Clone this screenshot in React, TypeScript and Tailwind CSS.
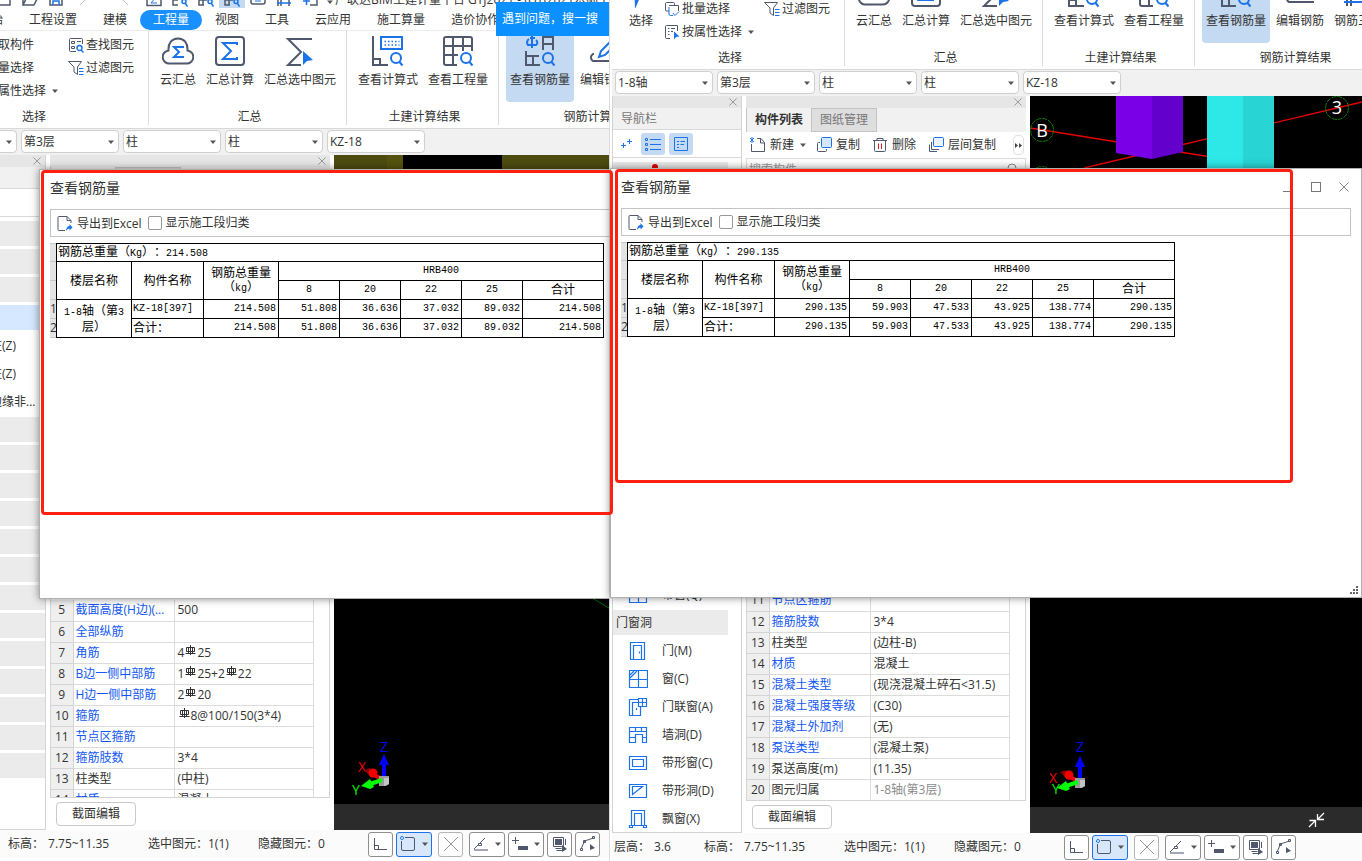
import { Fragment, type ReactNode } from 'react'
import clsx from 'clsx'

type NavRow = { label?: string; icon?: ReactNode; kind: 'group' | 'active' | 'item' }
type Prop = { no: number; name: string; value: string; plain?: boolean; muted?: boolean }
type Report = { total: string; d8: string; d20: string; d22: string; d25: string }

const DARK = '#4f586c'
const BLUE = '#1a73e8'

/* ---------- icons ---------- */

function Svg({ size = 16, children }: { size?: number; children: ReactNode }) {
  return (
    <svg width={size} height={size} viewBox={`0 0 ${size} ${size}`} fill="none" stroke={DARK} className="shrink-0">
      {children}
    </svg>
  )
}

const Magnifier = () => (
  <g stroke={BLUE} strokeWidth="2">
    <circle cx="24" cy="23" r="5" />
    <path d="M27.5 27l3 3.5" />
  </g>
)

const CloudSum = () => (
  <Svg size={32}>
    <path strokeWidth="2" d="M8 28.5A6.500 6.500 0 0 1 6.500 15.500C6 8 10 3.500 16 3.500s10 4.500 9.500 12A6.500 6.500 0 0 1 24 28.500Z" />
    <path stroke={BLUE} strokeWidth="2" d="M21 13v-1h-9l5 5-5 5h9v-1" />
  </Svg>
)
const BoxSum = () => (
  <Svg size={32}>
    <rect x="2" y="2" width="28" height="28" rx="3" strokeWidth="2" />
    <path stroke={BLUE} strokeWidth="2" d="M23 10V8H9l8 8-8 8h14v-2" />
  </Svg>
)
const SelectSum = () => (
  <Svg size={32}>
    <path strokeWidth="2" d="M28 4H4l13 13L4 30h13" />
    <path fill={BLUE} stroke="none" d="M19 16l10 9-6 1-4 4z" />
  </Svg>
)
const ViewFormula = () => (
  <Svg size={32}>
    <path strokeWidth="2" d="M1 1v29h15M1 24h7v6" />
    <rect x="9" y="2" width="21" height="12" stroke={BLUE} strokeWidth="2" />
    <path stroke={BLUE} strokeWidth="1.5" strokeDasharray="1.5 2" d="M12.5 6.500h15M12.5 10h15" />
    <Magnifier />
  </Svg>
)
const ViewQuantity = () => (
  <Svg size={32}>
    <path strokeWidth="2" d="M15 30H4a2 2 0 0 1-2-2V4a2 2 0 0 1 2-2h24a2 2 0 0 1 2 2v12M2 11h28M2 20h14M11 2v28M21 2v14" />
    <Magnifier />
  </Svg>
)
const ViewRebar = () => (
  <Svg size={32}>
    <path stroke={BLUE} strokeWidth="2" d="M8 1v12M5 4a4 4 0 0 0-1 6h8a3 3 0 0 0 0-5M6 3h5" />
    <path strokeWidth="2" d="M19 15V2h10v13M19 9h10M2 16v14h14M2 21h13M9 21v9" />
    <Magnifier />
  </Svg>
)
const EditRebar = () => (
  <Svg size={32}>
    <path strokeWidth="2" d="M6 19H5a4 4 0 0 0 0 7h25" />
    <path stroke={BLUE} strokeWidth="2" d="M11 22l2-6L26 3l4 4-13 13z" />
  </Svg>
)
const Rebar3d = () => (
  <Svg size={32}>
    <path strokeWidth="2" d="M5 30V4M9 30V8M26 30V4" />
    <path stroke={BLUE} strokeWidth="2" d="M2 26h28M2 10h28" />
  </Svg>
)
const Pointer = () => (
  <Svg size={32}>
    <path fill={BLUE} stroke="none" d="M9 4l17 14-10 1-6 14z" />
  </Svg>
)

const FindIcon = () => (
  <Svg>
    <path d="M8 14.5H2.500a1 1 0 0 1-1-1v-11a1 1 0 0 1 1-1h11a1 1 0 0 1 1 1V7M3.500 4.500h3v2h-3zM3.500 9.500h3v2h-3zM9 4.500h4" />
    <path stroke={BLUE} strokeWidth="1.5" d="M13.5 13.5l2 2M14 11a2.5 2.5 0 1 1-5 0 2.5 2.5 0 0 1 5 0z" />
  </Svg>
)
const FilterIcon = () => (
  <Svg>
    <path d="M.5 1.500h13L9.500 7v7.500L6 12V7z" />
    <path stroke={BLUE} d="M11 8.500h4.500M11 11.500h4.500M11 14.500h4.500" />
  </Svg>
)
const BatchIcon = () => (
  <Svg>
    <path d="M5 10H2.500a1 1 0 0 1-1-1V2.500a1 1 0 0 1 1-1h7a1 1 0 0 1 1 1V4M5 4.500h9.500V10" />
    <path stroke={BLUE} d="M5 6v7a1.5 1.5 0 0 0 1.500 1.500H9M9 12l2 2.500 4-4" />
  </Svg>
)
const PropSelectIcon = () => (
  <Svg>
    <path d="M6 14.500H2.500a1 1 0 0 1-1-1v-11a1 1 0 0 1 1-1h11V7M4 4.500h1.500M7 4.500h4M4 7.500h1.500M7 7.500h2M4 10.500h1.500" />
    <path fill={BLUE} stroke="none" d="M10 7.500l5.500 5-3.500.5-2 2.500z" />
  </Svg>
)
const NewIcon = () => (
  <Svg>
    <path d="M7 1.500h4l3.500 4v9h-13V7M10.500 1.500v4.500H15" />
    <path stroke={BLUE} d="M0 1l4 4M4 1L0 5M2 0v6" />
  </Svg>
)
const CopyIcon = () => (
  <Svg>
    <path d="M4 5.500H2.500a1 1 0 0 0-1 1v7a1 1 0 0 0 1 1h7a1 1 0 0 0 1-1V12" />
    <rect x="5.500" y=".5" width="10" height="10" rx="1" stroke={BLUE} fill="#d6e8ff" />
  </Svg>
)
const TrashIcon = () => (
  <Svg>
    <path d="M1 3.500h14M5 3V1.500h6V3M2.500 3.500v10a1 1 0 0 0 1 1h9a1 1 0 0 0 1-1v-10" />
    <path stroke="#e02020" d="M6.500 6.500V12M9.500 6.500V12" />
  </Svg>
)
const LayerCopyIcon = () => (
  <Svg>
    <path d="M3.500 5v7.500H11M1.500 7.500v7h7.500" />
    <rect x="5.500" y=".5" width="10" height="9" rx="1" stroke={BLUE} fill="#eaf3ff" />
  </Svg>
)
const ExportIcon = () => (
  <Svg>
    <path d="M8 14.500H2a1 1 0 0 1-1-1v-12a1 1 0 0 1 1-1h8l4 4V7M10 .5v4h4" />
    <path fill={BLUE} stroke="none" d="M9 15c0-3 1.500-5 3.500-5V8l3 3.500-3 3v-2c-1.500 0-2.500 1-3.500 2.500z" />
  </Svg>
)

const Caret = ({ className }: { className?: string }) => (
  <svg width="6" height="4" viewBox="0 0 6 4" className={clsx('shrink-0', className)}>
    <path d="M0 .5h6L3 4z" fill="#555" />
  </svg>
)
const Cross = ({ size = 8 }: { size?: number }) => (
  <svg width={size} height={size} viewBox="0 0 10 10" stroke="#888" fill="none" className="shrink-0">
    <path d="M.5.5l9 9M9.500.5l-9 9" />
  </svg>
)

const NavIcon = ({ d }: { d: string }) => (
  <svg width="20" height="20" viewBox="0 0 20 20" fill="none" stroke={BLUE} strokeWidth="1.2" className="shrink-0">
    <path d={d} />
  </svg>
)

// grade III rebar mark
const RebarMark = () => (
  <svg width="11" height="11" viewBox="0 0 11 11" fill="none" stroke="#333" className="mx-px inline-block align-[1px]">
    <path d="M1.500 2.500h8v4h-8zM5.500 0v10M.5 8.500h10M3.500 2.500v6M7.500 2.500v6" />
  </svg>
)

/* ---------- data ---------- */

const leftNav: NavRow[] = [
  { kind: 'group' },
  { kind: 'group' },
  { kind: 'group' },
  { kind: 'active' },
  { kind: 'item', label: '构造柱(Z)' },
  { kind: 'item', label: '砌体柱(Z)' },
  { kind: 'item', label: '约束边缘非...' },
  ...Array.from({ length: 13 }, (): NavRow => ({ kind: 'group' })),
]

const rightNav: NavRow[] = [
  { kind: 'group' },
  ...Array.from({ length: 14 }, (): NavRow => ({ kind: 'item' })),
  { kind: 'item', label: '带窗(Q)', icon: <NavIcon d="M1.500 2.500h17v15h-17zM1.500 10h17M10.500 2.500v15" /> },
  { kind: 'group', label: '门窗洞' },
  { kind: 'item', label: '门(M)', icon: <NavIcon d="M2.500 1.500h14v17h-14zM5.500 18.500v-14h8v14M11.500 10.500v2" /> },
  { kind: 'item', label: '窗(C)', icon: <NavIcon d="M1.500 1.500h18v17h-18zM1.500 10.500h18M10.500 1.500v17M2 6l4-4M2 9l7-7" /> },
  { kind: 'item', label: '门联窗(A)', icon: <NavIcon d="M10 2.500H1.500v16h11V9.500M4.500 18.500v-13H10M8.500 11v2M10.500 1.500h8v8h-8zM10.500 5.500h8M14.500 1.500v8" /> },
  { kind: 'item', label: '墙洞(D)', icon: <NavIcon d="M1.500 2.500h17v15h-4v-8h-7v8h-6zM1.500 6.500h17M7.500 2.500v4M13.500 2.500v4M1.500 12.500h6M14.500 12.500h4" /> },
  { kind: 'item', label: '带形窗(C)', icon: <NavIcon d="M1.500 3.500h17v13h-17zM4.500 6.500h11v7h-11z" /> },
  { kind: 'item', label: '带形洞(D)', icon: <NavIcon d="M1.500 3.500h17v13h-17zM4.500 13.500v-8h10z" /> },
  { kind: 'item', label: '飘窗(X)', icon: <NavIcon d="M3.500 1.500h13v15h-13zM6.500 16.500v-12h7v12M1.500 16.500h3v2h-3zM15.500 16.500h3v2h-3z" /> },
]

// '#' stands for the rebar mark
const leftProps: Prop[] = [
  { no: 5, name: '截面高度(H边)(...', value: '500' },
  { no: 6, name: '全部纵筋', value: '' },
  { no: 7, name: '角筋', value: '4#25' },
  { no: 8, name: 'B边一侧中部筋', value: '1#25+2#22' },
  { no: 9, name: 'H边一侧中部筋', value: '2#20' },
  { no: 10, name: '箍筋', value: '#8@100/150(3*4)' },
  { no: 11, name: '节点区箍筋', value: '' },
  { no: 12, name: '箍筋肢数', value: '3*4' },
  { no: 13, name: '柱类型', value: '(中柱)', plain: true },
  { no: 14, name: '材质', value: '混凝土' },
]

const rightProps: Prop[] = [
  { no: 11, name: '节点区箍筋', value: '' },
  { no: 12, name: '箍筋肢数', value: '3*4' },
  { no: 13, name: '柱类型', value: '(边柱-B)', plain: true },
  { no: 14, name: '材质', value: '混凝土' },
  { no: 15, name: '混凝土类型', value: '(现浇混凝土碎石<31.5)' },
  { no: 16, name: '混凝土强度等级', value: '(C30)' },
  { no: 17, name: '混凝土外加剂', value: '(无)' },
  { no: 18, name: '泵送类型', value: '(混凝土泵)' },
  { no: 19, name: '泵送高度(m)', value: '(11.35)', plain: true },
  { no: 20, name: '图元归属', value: '1-8轴(第3层)', plain: true, muted: true },
]

const leftReport: Report = { total: '214.508', d8: '51.808', d20: '36.636', d22: '37.032', d25: '89.032' }
const rightReport: Report = { total: '290.135', d8: '59.903', d20: '47.533', d22: '43.925', d25: '138.774' }

const menuTabs = ['开始', '工程设置', '建模', '工程量', '视图', '工具', '云应用', '施工算量', '造价协作']

/* ---------- ribbon ---------- */

function BigButton({ icon, label, active }: { icon: ReactNode; label: string; active?: boolean }) {
  return (
    <button
      className={clsx(
        'mt-0.5 flex h-[69px] shrink-0 flex-col items-center gap-[5px] rounded pt-0.5',
        active ? 'mx-px bg-[#c4daf2] px-1' : 'px-[5px]',
      )}
    >
      <span className="flex h-8 w-8 justify-center">{icon}</span>
      <span>{label}</span>
    </button>
  )
}

function SmallButton({ icon, label, caret }: { icon: ReactNode; label: string; caret?: boolean }) {
  return (
    <button className="flex h-[23px] items-center gap-0.5">
      {icon}
      <span>{label}</span>
      {caret && <Caret className="ml-1" />}
    </button>
  )
}

function Group({ title, children, className }: { title: string; children: ReactNode; className?: string }) {
  return (
    <div className={clsx('flex h-[94px] shrink-0 flex-col border-r border-[#dcdcdc]', className)}>
      <div className="flex h-[78px] pr-[5px] pl-1.5">{children}</div>
      <div className="pl-1 text-center">{title}</div>
    </div>
  )
}

function Ribbon() {
  return (
    <div className="flex h-[97px] shrink-0">
      <Group title="选择" className="w-[233px]">
        <div className="flex w-[46px] shrink-0 justify-center">
          <BigButton icon={<Pointer />} label="选择" />
        </div>
        <div className="flex w-[100px] shrink-0 flex-col items-start pt-0.5">
          <SmallButton icon={<FindIcon />} label="拾取构件" />
          <SmallButton icon={<BatchIcon />} label="批量选择" />
          <SmallButton icon={<PropSelectIcon />} label="按属性选择" caret />
        </div>
        <div className="flex shrink-0 flex-col items-start pt-0.5">
          <SmallButton icon={<FindIcon />} label="查找图元" />
          <SmallButton icon={<FilterIcon />} label="过滤图元" />
        </div>
      </Group>
      <Group title="汇总">
        <BigButton icon={<CloudSum />} label="云汇总" />
        <BigButton icon={<BoxSum />} label="汇总计算" />
        <BigButton icon={<SelectSum />} label="汇总选中图元" />
      </Group>
      <Group title="土建计算结果">
        <BigButton icon={<ViewFormula />} label="查看计算式" />
        <BigButton icon={<ViewQuantity />} label="查看工程量" />
      </Group>
      <Group title="钢筋计算结果">
        <BigButton icon={<ViewRebar />} label="查看钢筋量" active />
        <BigButton icon={<EditRebar />} label="编辑钢筋" />
        <BigButton icon={<Rebar3d />} label="钢筋三维" />
      </Group>
    </div>
  )
}

function QuickCell({ children, wide, active }: { children: ReactNode; wide?: boolean; active?: boolean }) {
  return (
    <button
      className={clsx('flex h-4 shrink-0 justify-center', wide ? 'w-9' : 'w-[26px]', active && 'bg-[#c4daf2]')}
    >
      <Svg>{children}</Svg>
    </button>
  )
}

function QuickAccess() {
  const lens = <path stroke={BLUE} strokeWidth="1.5" d="M14 9.500a2 2 0 1 1-4 0 2 2 0 0 1 4 0zM13.500 11.500l2 3" />
  return (
    <div className="flex h-2 items-end overflow-hidden pl-[75px] whitespace-nowrap">
      <QuickCell><path strokeWidth="1.5" d="M2 1h12v12H2z" /></QuickCell>
      <QuickCell><path strokeWidth="1.5" d="M1 13V2h5l2 2h5v3M1 13l3-6h11l-3 6z" /></QuickCell>
      <QuickCell><path strokeWidth="1.5" d="M2 1h12v12H2z" /><path stroke={BLUE} strokeWidth="1.5" d="M5 13V9h6v4" /></QuickCell>
      <QuickCell wide><path stroke="#bbb" d="M1 13l8-8M6 5h9" /></QuickCell>
      <QuickCell wide><path stroke="#bbb" d="M13 13L5 5" /></QuickCell>
      <QuickCell><path strokeWidth="1.5" d="M1 1h14v12.500H1z" /><path stroke={BLUE} d="M11 5H5l3 2.500L5 11h6" /></QuickCell>
      <QuickCell><path strokeWidth="1.5" d="M1 1v12h5M1 8h5" />{lens}</QuickCell>
      <QuickCell><path strokeWidth="1.5" d="M1 1v12h5M1 8h8M5 8v5" />{lens}</QuickCell>
      <QuickCell active><path strokeWidth="1.5" d="M1 1v12h5M1 8h8M5 8v5" />{lens}</QuickCell>
      <QuickCell><path strokeWidth="1.5" d="M1 7v3a2 2 0 0 0 2 2h10a2 2 0 0 0 2-2V7" /><path stroke={BLUE} d="M5 9h6" /></QuickCell>
      <QuickCell><path strokeWidth="1.5" d="M2 1v13M5 1v13M13 1v13" /><path stroke={BLUE} strokeWidth="1.5" d="M1 11h14" /></QuickCell>
      <QuickCell><path stroke={BLUE} strokeWidth="1.5" d="M1 9h7M4.500 5v8" /><path strokeWidth="1.5" d="M8 13h7V2" /></QuickCell>
      <span className="flex h-3 w-4 items-center justify-center pl-1"><Caret /></span>
      <span className="pl-0.5">广联达BIM土建计量平台 GTJ2021 - [GTJ2021基础工程</span>
    </div>
  )
}

function MenuTabs() {
  return (
    <nav className="flex h-[23px] items-center border-b border-[#ececec] pt-px pl-[50px]">
      {menuTabs.map((t) => (
        <button
          key={t}
          className={clsx('h-5 shrink-0 rounded-full px-[13px]', t === '工程量' && 'bg-[#1890ff] text-white')}
        >
          {t}
        </button>
      ))}
    </nav>
  )
}

function FilterBar() {
  const combos = [
    ['楼栋', '1-8轴'],
    ['楼层', '第3层'],
    ['构件大类', '柱'],
    ['构件类型', '柱'],
    ['构件', 'KZ-18'],
  ]
  return (
    <div className="flex h-[27px] shrink-0 items-start gap-1 border-t border-[#d9d9d9] bg-[#f1f1f1] pt-px pl-[3px]">
      {combos.map(([name, value]) => (
        <label key={name} className="relative shrink-0">
          <select
            aria-label={name}
            className="block h-[23px] w-[98px] appearance-none rounded border border-[#d0d0d0] bg-white pl-0.5 outline-none"
          >
            <option>{value}</option>
          </select>
          <Caret className="pointer-events-none absolute top-[10px] right-[5px]" />
        </label>
      ))}
    </div>
  )
}

/* ---------- docked panels ---------- */

function PanelTitle() {
  return (
    <div className="flex h-3 shrink-0 items-center justify-end bg-[#e6e6e6] pr-1">
      <button aria-label="关闭"><Cross /></button>
    </div>
  )
}

function NavPanel({ rows, scroll }: { rows: NavRow[]; scroll?: boolean }) {
  return (
    <aside className="flex w-[130px] shrink-0 flex-col overflow-hidden border border-t-0 border-[#d4d4d4]">
      <PanelTitle />
      <div className="h-[22px] shrink-0 border-b border-[#d9d9d9] bg-[#f1f1f1] pt-[3px] pl-2 text-[#777]">导航栏</div>
      <div className="flex h-7 shrink-0 items-center gap-1 border-b border-[#d9d9d9] pl-2">
        <button aria-label="展开" className="mr-1">
          <svg width="12" height="12" viewBox="0 0 12 12" stroke={BLUE} fill="none">
            <path d="M8.500 1v5M6 3.500h5M2.500 5v5M0 7.500h5" />
          </svg>
        </button>
        <button aria-label="列表" className="flex h-[22px] w-6 items-center justify-center rounded-[3px] bg-[#c4daf2]">
          <svg width="16" height="14" viewBox="0 0 16 14" stroke={BLUE} fill="none">
            <path d="M5 2.500h11M5 7.500h11M5 12.500h11M.5 1.500h2v2h-2zM.5 6.500h2v2h-2zM.5 11.500h2v2h-2z" />
          </svg>
        </button>
        <button aria-label="详情" className="flex h-[22px] w-6 items-center justify-center rounded-[3px] bg-[#c4daf2]">
          <svg width="16" height="16" viewBox="0 0 16 16" stroke={BLUE} fill="none">
            <path d="M1.500 1.500h13v13h-13zM4 5.500h2M7.500 5.500H12M4 8.500h2M7.500 8.500H11M4 11.500h2" />
          </svg>
        </button>
      </div>
      <div className="min-h-0 flex-1 pt-1">
        {rows.map((r, i) => (
          <div
            key={i}
            className={clsx(
              'mb-[3px] flex h-[25px] items-center gap-[14px]',
              scroll && 'mr-[13px]',
              r.kind === 'group' && 'bg-[#ebebeb] pl-[3px]',
              r.kind === 'active' && 'bg-[#d6e8ff]',
              r.kind === 'item' && 'pl-[15px]',
            )}
          >
            {scroll && i === 0 && (
              <svg width="80" height="25" viewBox="0 0 80 25"><circle cx="39" cy="5" r="3" fill="#e00000" /></svg>
            )}
            {r.kind === 'item' && (r.icon ?? <span className="w-5 shrink-0" />)}
            <span className="whitespace-nowrap">{r.label}</span>
          </div>
        ))}
      </div>
    </aside>
  )
}

function ListTool({ icon, label }: { icon: ReactNode; label: string }) {
  return (
    <button className="flex shrink-0 items-center gap-1">
      {icon}
      {label}
    </button>
  )
}

function PropTable({ rows, className }: { rows: Prop[]; className: string }) {
  return (
    <div className={clsx('shrink-0 overflow-hidden border border-t-0 border-[#d4d4d4]', className)}>
      <table className="w-[262px] table-fixed border-collapse">
        <colgroup>
          <col className="w-[22px]" />
          <col className="w-[101px]" />
          <col className="w-[139px]" />
        </colgroup>
        <tbody>
          {rows.map((p) => (
            <tr key={p.no} className="h-[21px]">
              <td className="border-r border-b border-[#d4d4d4] bg-[#efefef] p-0 text-center">{p.no}</td>
              <td
                className={clsx(
                  'overflow-hidden border-r border-b border-[#dcdcdc] p-0 pl-0.5 whitespace-nowrap',
                  !p.plain && 'text-[#1257f5]',
                )}
              >
                {p.name}
              </td>
              <td
                className={clsx(
                  'border-r border-b border-[#dcdcdc] p-0 pl-[3px] whitespace-nowrap',
                  p.muted && 'text-[#8a8a8a]',
                )}
              >
                {p.value.split('#').map((part, i) => (
                  <Fragment key={i}>
                    {i > 0 && <RebarMark />}
                    {part}
                  </Fragment>
                ))}
              </td>
            </tr>
          ))}
          <tr className="h-[21px]">
            <td className="border-r border-[#d4d4d4] bg-[#efefef]" />
            <td className="border-r border-[#dcdcdc]" />
            <td className="border-r border-[#dcdcdc]" />
          </tr>
        </tbody>
      </table>
    </div>
  )
}

function ComponentPanel({ rows, tableClass }: { rows: Prop[]; tableClass: string }) {
  return (
    <section className="flex w-[280px] shrink-0 flex-col">
      <PanelTitle />
      <div className="flex h-6 shrink-0 bg-[#f1f1f1]">
        <button className="border-x border-[#c4c4c4] bg-[#f1f1f1] px-2 font-bold">构件列表</button>
        <button className="border border-l-0 border-[#c4c4c4] bg-[#dedede] px-2 text-[#777]">图纸管理</button>
      </div>
      <div className="flex h-[27px] shrink-0 items-center border-b border-[#dcdcdc] pl-1">
        <ListTool icon={<NewIcon />} label="新建" />
        <Caret className="mr-[10px] ml-1.5" />
        <div className="flex items-center gap-3">
          <ListTool icon={<CopyIcon />} label="复制" />
          <ListTool icon={<TrashIcon />} label="删除" />
          <ListTool icon={<LayerCopyIcon />} label="层间复制" />
        </div>
        <button aria-label="更多" className="mr-0.5 ml-auto flex h-5 w-[11px] items-center justify-center rounded border border-[#e2e2e2]">
          <svg width="7" height="5" viewBox="0 0 7 5" fill="#444" className="shrink-0"><path d="M0 0l3 2.500L0 5zM4 0l3 2.500L4 5z" /></svg>
        </button>
      </div>
      <div className="flex min-h-0 flex-1 items-start justify-between border-x border-[#dcdcdc] pr-2 pl-0.5">
        <input aria-label="搜索构件" placeholder="搜索构件" className="h-5 w-40 outline-none placeholder:text-[#999]" />
        <svg width="10" height="12" viewBox="0 0 10 12" stroke="#888" fill="none" className="mt-1">
          <circle cx="5" cy="5" r="4" />
        </svg>
      </div>
      <PropTable rows={rows} className={tableClass} />
      <div className="flex h-8 shrink-0 items-start pt-1 pl-1.5">
        <button className="h-6 w-20 rounded border border-[#c8c8c8] bg-white">截面编辑</button>
      </div>
    </section>
  )
}

/* ---------- 3d view ---------- */

function LeftScene() {
  return (
    <svg width="276" height="16" viewBox="0 0 276 16">
      <path fill="#4d4b10" d="M0 0h276v16H0z" />
      <path fill="#55530f" d="M53 0h16v16H53z" />
      <path fill="#000" d="M69 0h99v16H69z" />
    </svg>
  )
}

function RightScene() {
  return (
    <svg width="332" height="86" viewBox="0 0 332 86">
      <path stroke="#e80000" strokeWidth="1.300" fill="none" d="M0 32l200 32M54 72l278-66" />
      <path fill="#7a00e8" d="M86 0h36v63l-36-6z" />
      <path fill="#6400cc" d="M122 0h31v56l-31 7z" />
      <path fill="#2ee8e8" d="M177 0h36v86h-36z" />
      <path fill="#28d4d4" d="M213 0h31v86h-31z" />
      <g stroke="#0a7a0a" fill="none">
        <circle cx="12" cy="34" r="11.500" strokeDasharray="5 1" />
        <circle cx="12" cy="82" r="11.500" strokeDasharray="5 1" />
        <circle cx="307" cy="12" r="11.500" strokeDasharray="5 1" />
      </g>
      <g fill="#fff" fontSize="18" textAnchor="middle">
        <text x="12" y="41">B</text>
        <text x="307" y="18">3</text>
      </g>
    </svg>
  )
}

function Axis({ variant }: { variant: 'left' | 'right' }) {
  const left = variant === 'left'
  return (
    <svg width="60" height="60" viewBox="0 0 60 60" className="absolute bottom-[29px] left-4 overflow-visible">
      <g fontSize="14" fontFamily="Open Sans, sans-serif" textAnchor="middle">
        <text x="34" y={left ? 11 : 8} fill="#0000f0">Z</text>
        <text x={left ? 12 : 7} y={left ? 31 : 39} fill="#f00000">X</text>
        <text x={left ? 6 : 10} y={left ? 54 : 50} fill="#00f000">Y</text>
      </g>
      <g transform={left ? undefined : 'translate(0 -1)'}>
        <path fill="#00f" d="M32 38V24h-3l5-11 5 11h-3v14z" />
        <path fill="#8a0000" d="M14 29l6-2 5 8-3 2z" />
        <path stroke="#f00000" strokeWidth="4" d="M22 33l10 5" />
        <circle cx="23" cy="32" r="4.500" fill="#f00000" />
        <path fill="#9a9a9a" d="M29 35h10v8l-3 2h-7z" />
        <path fill="#c4c4c4" d="M34 37h5v6l-5 2z" />
        <path stroke="#0f0" strokeWidth="4" d="M32 39l-12 4" />
        <path fill="#0f0" d="M11 45l9-7 4 8-4 2z" />
      </g>
    </svg>
  )
}

function Viewport({ variant }: { variant: 'left' | 'right' }) {
  return (
    <main className="relative flex min-w-0 flex-1 flex-col overflow-hidden bg-black">
      <div className="flex-1">{variant === 'left' ? <LeftScene /> : <RightScene />}</div>
      {variant === 'left' && (
        <svg width="20" height="12" viewBox="0 0 20 12" stroke="#0a6a0a" className="absolute top-[443px] right-0">
          <path d="M3 0l17 10" />
        </svg>
      )}
      <Axis variant={variant} />
      <div className="flex h-[26px] shrink-0 items-center justify-end bg-[#2b2b2b] pr-9">
        {variant === 'right' && (
          <button aria-label="收起">
            <svg width="18" height="18" viewBox="0 0 18 18" stroke="#fff" strokeWidth="1.300" fill="none">
              <path d="M16 2l-6 6M9.500 3v5.500H16M1 16l6-6M1.500 9.500h6V16" />
            </svg>
          </button>
        )}
      </div>
    </main>
  )
}

/* ---------- status bar ---------- */

function StatusButton({ label, d, caret, active, faded, extra, className }: {
  label: string
  d: string
  caret?: boolean
  active?: boolean
  faded?: boolean
  extra?: ReactNode
  className?: string
}) {
  return (
    <button
      aria-label={label}
      className={clsx(
        'flex h-[25px] shrink-0 items-center justify-center gap-1.5 rounded-[3px] border',
        caret ? 'w-9' : 'w-[25px]',
        active ? 'border-[#1a73e8] bg-[#d8e7fb]' : faded ? 'border-[#b4b4b4] bg-white' : 'border-[#8f8f8f] bg-white',
        className,
      )}
    >
      <svg width="16" height="16" viewBox="0 0 16 16" fill="none" stroke={faded ? '#999' : DARK} className="shrink-0">
        <path d={d} />
        {extra}
      </svg>
      {caret && <Caret />}
    </button>
  )
}

function StatusBar() {
  return (
    <footer className="flex h-7 shrink-0 items-center bg-[#fbfbfb] whitespace-nowrap">
      <span className="flex w-[92px] shrink-0 gap-1 pl-0.5"><span>层高：</span>3.6</span>
      <span className="flex w-[140px] shrink-0 gap-1"><span>标高：</span>7.75~11.35</span>
      <span className="w-[110px] shrink-0">选中图元：1(1)</span>
      <span className="w-[110px] shrink-0">隐藏图元：0</span>
      <div className="flex gap-[3px]">
        <StatusButton label="正交" d="M1.500 2v11.500H14M1.500 9.500h4v4" />
        <StatusButton
          label="对象捕捉"
          d="M5 1.500h8a1.500 1.500 0 0 1 1.500 1.500v10a1.500 1.500 0 0 1-1.500 1.500H3A1.500 1.500 0 0 1 1.500 13V5"
          caret
          active
          extra={<circle cx="2" cy="2" r="1.500" stroke={BLUE} fill="#fff" />}
        />
        <StatusButton label="交点" d="M1 1l14 14M15 1L1 15" faded className="mx-[3px]" />
        <StatusButton
          label="极轴"
          d="M1 13L12 2M5.500 7.500h3v2h-3z"
          caret
          extra={<path d="M1 14h14" stroke="#a0a6b4" strokeWidth="2" />}
        />
        <StatusButton label="偏移" d="M0 4.500h7M3.500 1v7" caret extra={<path d="M6 10h10v4H6z" fill={DARK} stroke="none" />} />
        <StatusButton
          label="图层"
          d="M1.500 1.500h10v9h-10zM3.500 12.500h6M13.500 3v6M4.500 14.500h6"
          extra={<path d="M3 3h7v6H3zM10 9l5 4-5 3z" fill={DARK} stroke="none" />}
        />
        <StatusButton
          label="折线"
          d="M1.500 12L4.500 5l9-3M.5 12.500h2v2h-2zM3.500 4.500h2v2h-2zM12.500.5h2v2h-2z"
          extra={<path d="M10 8l5 4-5 2z" fill={DARK} stroke="none" />}
        />
      </div>
    </footer>
  )
}

/* ---------- report dialog ---------- */

const cell = 'border border-black p-0'
const num = 'font-["Liberation_Mono",monospace] text-[10px]'

function ReportTable({ data }: { data: Report }) {
  const values = [data.total, data.d8, data.d20, data.d22, data.d25, data.total]
  return (
    <div className="flex leading-[14px] text-black">
      <div className="w-1.5 shrink-0 overflow-hidden border-t border-[#c8c8c8] bg-[#e4e4e4] text-[#333]">
        <div className="h-[18px] border-b border-[#c8c8c8]" />
        <div className="h-[19px] border-b border-[#c8c8c8]" />
        <div className="h-[19px] border-b border-[#c8c8c8]" />
        <div className="h-[19px] border-b border-[#c8c8c8] pt-0.5">1</div>
        <div className="h-[19px] border-b border-[#c8c8c8] pt-0.5">2</div>
      </div>
      <table className="w-[548px] shrink-0 table-fixed border-collapse [text-spacing-trim:space-all]">
        <colgroup>
          <col className="w-[75px]" />
          <col className="w-[72px]" />
          <col className="w-[75px]" />
          <col className="w-[61px]" />
          <col className="w-[61px]" />
          <col className="w-[61px]" />
          <col className="w-[61px]" />
          <col />
        </colgroup>
        <tbody>
          <tr className="h-[18px]">
            <td colSpan={8} className={clsx(cell, 'pl-px')}>
              钢筋总重量（<span className={num}>Kg</span>）：<span className={num}>{data.total}</span>
            </td>
          </tr>
          <tr className="h-[19px] text-center">
            <td rowSpan={2} className={cell}>楼层名称</td>
            <td rowSpan={2} className={cell}>构件名称</td>
            <td rowSpan={2} className={cell}>钢筋总重量<br />（<span className={num}>kg</span>）</td>
            <td colSpan={5} className={clsx(cell, num)}>HRB400</td>
          </tr>
          <tr className="h-[19px] text-center">
            {['8', '20', '22', '25'].map((d) => (
              <td key={d} className={clsx(cell, num)}>{d}</td>
            ))}
            <td className={cell}>合计</td>
          </tr>
          <tr className="h-[19px]">
            <td rowSpan={2} className={clsx(cell, 'text-center')}>
              <span className={num}>1-8</span>轴（第<span className={num}>3</span><br />层）
            </td>
            <td className={clsx(cell, num, 'pl-px')}>KZ-18[397]</td>
            {values.map((v, i) => (
              <td key={i} className={clsx(cell, num, 'pr-0.5 text-right')}>{v}</td>
            ))}
          </tr>
          <tr className="h-[19px]">
            <td className={clsx(cell, 'pl-px')}>合计：</td>
            {values.map((v, i) => (
              <td key={i} className={clsx(cell, num, 'pr-0.5 text-right')}>{v}</td>
            ))}
          </tr>
        </tbody>
      </table>
    </div>
  )
}

function ReportDialog({ data, className }: { data: Report; className: string }) {
  return (
    <div
      role="dialog"
      aria-label="查看钢筋量"
      className={clsx(
        'absolute flex h-[430px] flex-col border border-[#b0b0b0] bg-white px-[10px] shadow-[0_0_8px_rgba(0,0,0,0.45)]',
        className,
      )}
    >
      <div className="flex h-[39px] shrink-0 items-center justify-between pr-0.5 pb-[3px]">
        <h2 className="text-sm">查看钢筋量</h2>
        <div className="flex items-center gap-[18px]">
          <button aria-label="最小化" className="h-[10px] w-[10px] border-b border-[#777]" />
          <button aria-label="最大化" className="h-[10px] w-[10px] border border-[#777]" />
          <button aria-label="关闭"><Cross size={10} /></button>
        </div>
      </div>
      <div className="flex h-7 shrink-0 items-center gap-[7px] border border-[#c4c4c4] pl-1.5">
        <button className="flex items-center gap-1 pt-0.5">
          <ExportIcon />
          导出到Excel
        </button>
        <label className="flex items-center gap-[3px]">
          <input type="checkbox" className="h-[14px] w-[14px] appearance-none rounded-[2px] border border-[#999] bg-white" />
          显示施工段归类
        </label>
      </div>
      <div className="mt-1.5">
        <ReportTable data={data} />
      </div>
      <svg width="9" height="9" viewBox="0 0 9 9" fill="#666" className="absolute right-0.5 bottom-0.5">
        <path d="M6 0h2v2H6zM3 3h2v2H3zM6 3h2v2H6zM0 6h2v2H0zM3 6h2v2H3zM6 6h2v2H6z" />
      </svg>
    </div>
  )
}

function Workspace({ variant }: { variant: 'left' | 'right' }) {
  const left = variant === 'left'
  return (
    <div className="flex min-h-0 flex-1 bg-white">
      <NavPanel rows={left ? leftNav : rightNav} scroll={!left} />
      <div className="w-1 shrink-0" />
      <ComponentPanel rows={left ? leftProps : rightProps} tableClass={left ? 'h-[198px]' : 'h-[211px]'} />
      <div className="w-1 shrink-0" />
      <Viewport variant={variant} />
    </div>
  )
}

export default function App() {
  return (
    <div className="grid h-screen grid-cols-[610fr_752fr] grid-rows-[minmax(0,1fr)] overflow-hidden bg-white font-['Open_Sans','Noto_Sans_CJK_SC',sans-serif] text-xs leading-4 text-[#333]">
      <div className="relative min-w-0">
        <div className="relative h-full overflow-hidden border-r border-[#dcdcdc]">
          <div className="-ml-[84px] flex h-full flex-col pb-[3px]">
            <QuickAccess />
            <MenuTabs />
            <Ribbon />
            <FilterBar />
            <Workspace variant="left" />
            <StatusBar />
          </div>
          <button className="absolute top-0.5 right-0 h-[34px] w-[113px] bg-[#0a90ff] pl-1.5 text-left whitespace-nowrap text-white">
            遇到问题，搜一搜
          </button>
          <ReportDialog data={leftReport} className="top-[169px] -right-[180px] left-[39px]" />
        </div>
        <div className="pointer-events-none absolute top-[170px] -right-[3px] left-[41px] z-20 h-[345px] rounded border-3 border-[#ff2010]" />
      </div>

      <div className="relative min-w-0">
        <div className="flex h-full flex-col pl-0.5">
          <div className="flex h-[69px] shrink-0 items-end overflow-hidden">
            <Ribbon />
          </div>
          <FilterBar />
          <Workspace variant="right" />
          <StatusBar />
        </div>
        <ReportDialog data={rightReport} className="top-[168px] right-0 left-0" />
        <div className="pointer-events-none absolute top-[169px] right-[69px] left-[5px] z-20 h-[314px] rounded border-3 border-[#ff2010]" />
      </div>
    </div>
  )
}
